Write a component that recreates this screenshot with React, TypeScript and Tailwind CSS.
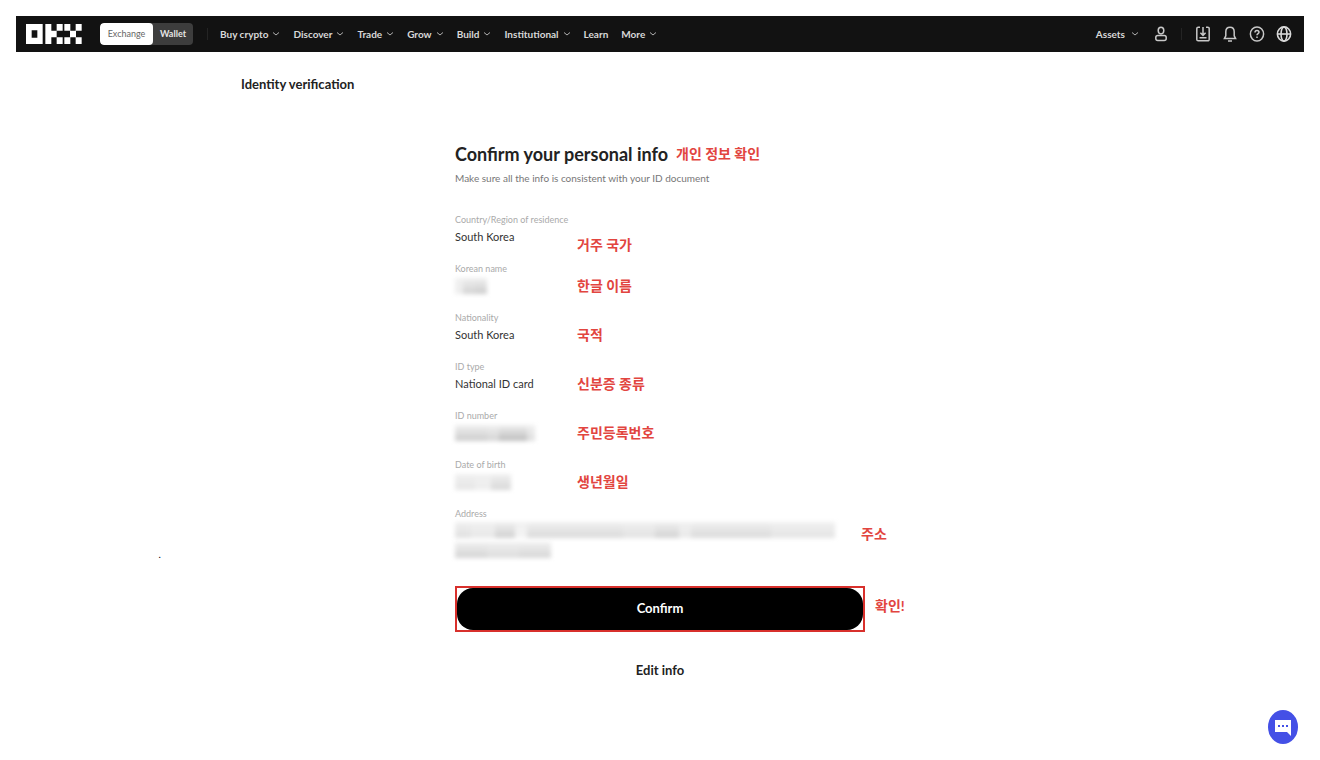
import React from 'react';

const navItems = [
  { label: 'Buy crypto', menu: true },
  { label: 'Discover', menu: true },
  { label: 'Trade', menu: true },
  { label: 'Grow', menu: true },
  { label: 'Build', menu: true },
  { label: 'Institutional', menu: true },
  { label: 'Learn', menu: false },
  { label: 'More', menu: true },
];

const Chevron: React.FC = () => (
  <svg className="h-2 w-2" viewBox="0 0 8 8" fill="none" stroke="#b0b0b0" strokeWidth="1">
    <path d="M1 2.5 4 5l3-2.5" />
  </svg>
);

const Logo: React.FC = () => (
  <svg className="h-5 w-14" viewBox="0 0 168 60" fill="#fff" role="img" aria-label="OKX">
    <path fillRule="evenodd" d="M0 0h50v60H0zM17 19v22h17V19z" />
    <path d="M58 0h18v20h16v20H76v20H58zM92 0h18v20H92zM92 40h18v20H92z" />
    <path d="M115 0h18v20h-18zM149 0h18v20h-18zM132 20h18v20h-18zM115 40h18v20h-18zM149 40h18v20h-18z" />
  </svg>
);

const Header: React.FC = () => (
  <header className="flex h-9 items-center bg-[#121212] pl-[10px] pr-3 text-[10px] font-bold text-[#d8d8d8]">
    <Logo />
    <div className="ml-[18px] flex h-[22px] overflow-hidden rounded-sm bg-[#3d3d3d] text-[9px]">
      <button className="w-[53px] rounded-sm bg-white font-normal text-[#666]">Exchange</button>
      <button className="w-10 text-[#e6e6e6]">Wallet</button>
    </div>
    <div className="ml-[14px] h-3 w-px bg-[#242424]" />
    <nav className="ml-3 flex items-center gap-[13px]">
      {navItems.map((item) => (
        <a key={item.label} href="#" className="flex items-center gap-1 whitespace-nowrap">
          {item.label}
          {item.menu && <Chevron />}
        </a>
      ))}
    </nav>
    <div className="ml-auto flex items-center">
      <a href="#" className="flex items-center gap-1.5">
        Assets
        <Chevron />
      </a>
      <button className="ml-[14px]" aria-label="Account">
        <svg className="h-4 w-4" viewBox="0 0 16 16" fill="none" stroke="#c8c8c8" strokeWidth="1.5">
          <ellipse cx="8" cy="4.6" rx="2.8" ry="3.3" />
          <rect x="2.8" y="9.4" width="10.4" height="5" rx="2" />
        </svg>
      </button>
      <div className="ml-3 h-3 w-px bg-[#242424]" />
      <div className="ml-[13px] flex gap-[11px]">
        <button aria-label="Download">
          <svg className="h-4 w-4" viewBox="0 0 16 16" fill="none" stroke="#c8c8c8" strokeWidth="1.5">
            <path d="M5 1.2H3.2a1.4 1.4 0 0 0-1.4 1.4v10.8a1.4 1.4 0 0 0 1.4 1.4h9.6a1.4 1.4 0 0 0 1.4-1.4V2.6a1.4 1.4 0 0 0-1.4-1.4H11" />
            <path d="M8 1v8M5.4 6.8 8 9.4l2.6-2.6M4.5 11.8h7" />
          </svg>
        </button>
        <button aria-label="Notifications">
          <svg className="h-4 w-4" viewBox="0 0 16 16" fill="none" stroke="#c8c8c8" strokeWidth="1.5">
            <path d="M8 1.2c-2.7 0-4.2 2-4.2 4.6v4l-1.4 2.8h11.2l-1.4-2.8v-4C12.2 3.2 10.7 1.2 8 1.2zM6 15h4" />
          </svg>
        </button>
        <button aria-label="Help">
          <svg className="h-4 w-4" viewBox="0 0 16 16" fill="none" stroke="#c8c8c8" strokeWidth="1.5">
            <ellipse cx="8" cy="8" rx="6.6" ry="7.1" />
            <path d="M6 6.4C6 5 6.9 4.4 8 4.4s2 .7 2 1.8C10 7.6 8 7.6 8 9.2M8 10.4v1.5" />
          </svg>
        </button>
        <button aria-label="Language">
          <svg className="h-4 w-4" viewBox="0 0 16 16" fill="none" stroke="#d8d8d8" strokeWidth="1.6">
            <ellipse cx="8" cy="8" rx="6.6" ry="7.1" />
            <ellipse cx="8" cy="8" rx="3" ry="7.1" />
            <path d="M1.5 8h13" />
          </svg>
        </button>
      </div>
    </div>
  </header>
);

const Note: React.FC<{ children: React.ReactNode; className?: string }> = ({ children, className = '' }) => (
  <span className={`whitespace-nowrap text-[14px] font-bold leading-5 text-[#e2453f] ${className}`}>{children}</span>
);

// Masked value: a row of grey blocks, softened at the edges
const Masked: React.FC<{ blocks: string[] }> = ({ blocks }) => (
  <span className="flex h-4 items-center blur-[2px]">
    {blocks.map((block, i) => (
      <span key={i} className={`h-4 bg-linear-to-b from-[#f0f0f0] ${block}`} />
    ))}
  </span>
);

const fields = [
  { label: 'Country/Region of residence', value: 'South Korea', note: '거주 국가', noteClass: '-mb-2' },
  {
    label: 'Korean name',
    value: <Masked blocks={['w-2 to-[#ededed]', 'w-3 to-[#d2d2d2]', 'w-3 to-[#cccccc]']} />,
    note: '한글 이름',
  },
  { label: 'Nationality', value: 'South Korea', note: '국적' },
  { label: 'ID type', value: 'National ID card', note: '신분증 종류' },
  {
    label: 'ID number',
    value: <Masked blocks={['w-8 to-[#cccccc]', 'w-3 to-[#d4d4d4]', 'w-7 to-[#bcbcbc]', 'w-2 to-[#dedede]']} />,
    note: '주민등록번호',
  },
  {
    label: 'Date of birth',
    value: <Masked blocks={['w-5 to-[#e6e6e6]', 'w-4 to-[#eeeeee]', 'w-5 to-[#d8d8d8]']} />,
    note: '생년월일',
  },
];

const App: React.FC = () => {
  return (
    <div className="min-h-screen bg-white p-4 font-['Lato','Noto_Sans_CJK_KR',sans-serif] text-[#222]">
      <Header />

      <h1 className="mx-auto mt-[22px] max-w-[838px] text-[13px] font-bold leading-5">Identity verification</h1>

      <main className="mx-auto mt-12 max-w-[410px]">
        <div className="flex items-center gap-2">
          <h2 className="whitespace-nowrap text-[18px] font-bold leading-6">Confirm your personal info</h2>
          <Note>개인 정보 확인</Note>
        </div>
        <p className="mt-1 text-[10px] leading-4 text-[#777]">Make sure all the info is consistent with your ID document</p>

        <dl className="mt-7 flex flex-col gap-4">
          {fields.map((field) => (
            <div key={field.label} className="flex items-end">
              <div className="w-[122px] whitespace-nowrap">
                <dt className="mb-px text-[9px] leading-3 text-[#aaa]">{field.label}</dt>
                <dd className="flex h-5 items-center text-[11px] leading-5 text-[#333]">{field.value}</dd>
              </div>
              <Note className={field.noteClass}>{field.note}</Note>
            </div>
          ))}
          <div className="relative">
            <dt className="mb-px text-[9px] leading-3 text-[#aaa]">Address</dt>
            <dd className="flex flex-col gap-1 pt-px">
              <Masked
                blocks={[
                  'w-4 to-[#e0e0e0]',
                  'w-6 to-[#e8e8e8]',
                  'w-5 to-[#d0d0d0]',
                  'w-3 to-[#f4f4f4]',
                  'w-24 to-[#dadada]',
                  'w-8 to-[#e2e2e2]',
                  'w-6 to-[#d2d2d2]',
                  'w-3 to-[#eaeaea]',
                  'w-20 to-[#dadada]',
                  'w-16 to-[#e4e4e4]',
                ]}
              />
              <Masked blocks={['w-8 to-[#d4d4d4]', 'w-8 to-[#dcdcdc]', 'w-8 to-[#d6d6d6]']} />
            </dd>
            <Note className="absolute left-full top-4 -ml-1">주소</Note>
          </div>
        </dl>

        <div className="relative mt-7 border-2 border-[#d8302c]">
          <button className="block h-[42px] w-full rounded-[16px] bg-black text-[13px] font-bold text-white">Confirm</button>
          <Note className="absolute left-full top-2 ml-3">확인!</Note>
        </div>
        <button className="mx-auto mt-7 block text-[13px] font-bold leading-5">Edit info</button>
      </main>

      {/* Stray mark in the left margin */}
      <span className="absolute left-[12%] top-[546px] text-[10px] leading-4 text-black">.</span>

      <button
        className="fixed bottom-4 right-[22px] flex h-[34px] w-[30px] items-center justify-center rounded-[50%] bg-[#4450e6]"
        aria-label="Chat"
      >
        <svg className="h-5 w-4" viewBox="0 0 16 20">
          <path d="M0 3h16v16l-4-4H0z" fill="#fff" />
          <path d="M3 8h2v2H3zM7 8h2v2H7zM11 8h2v2h-2z" fill="#4450e6" />
        </svg>
      </button>
    </div>
  );
};

export default App;
